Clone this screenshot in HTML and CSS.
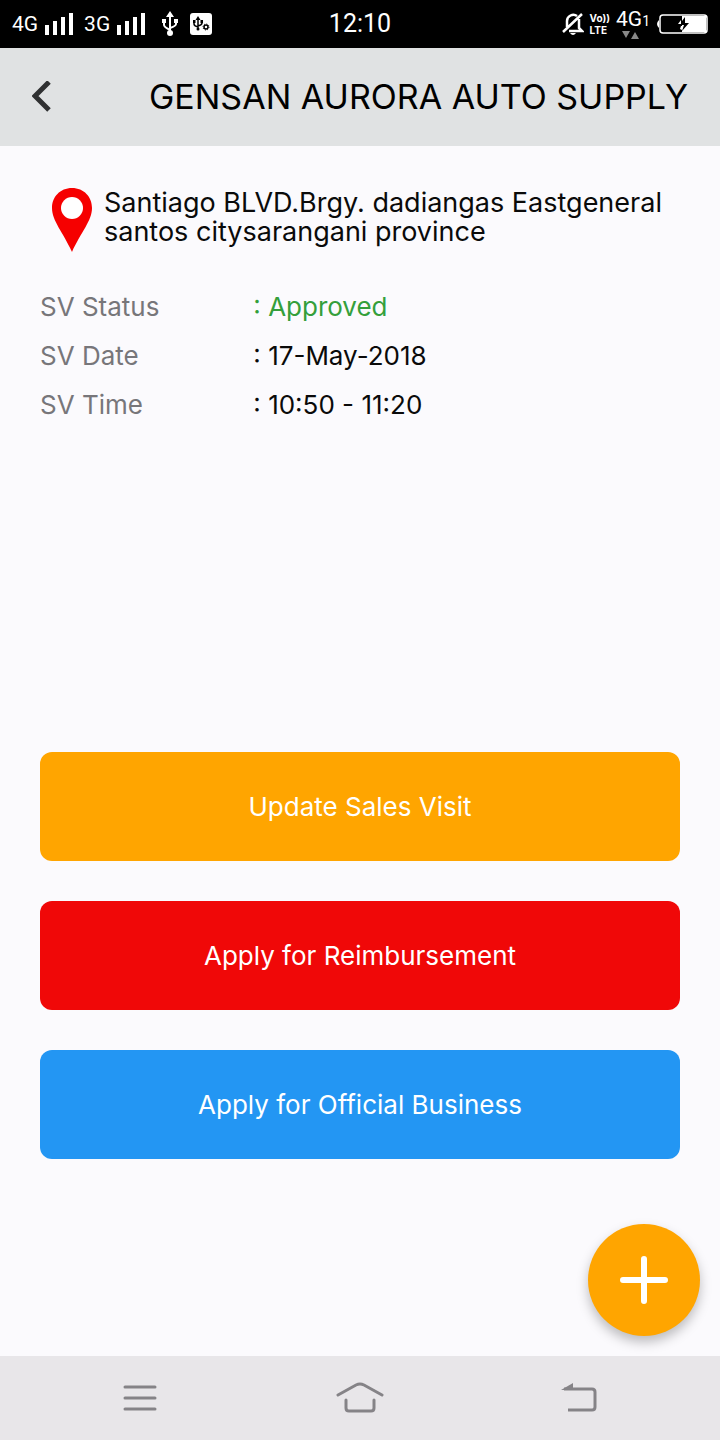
FILE: index.html
```
<!DOCTYPE html>
<html lang="en">
<head>
    <meta charset="UTF-8">
    <meta name="viewport" content="width=device-width, initial-scale=1.0">
    <title>Sales Visit</title>
    <link rel="stylesheet" href="styles.css">
</head>
<body>
    <div class="status-bar">
        <div class="status-left">
            <span>4G</span>
            <svg class="signal" width="30" height="24" viewBox="0 0 30 24" fill="#fff">
                <path d="M1 13h4v10H1zM9 9h4v14H9zM17 5h4v18h-4zM25 1h4v22h-4z"/>
            </svg>
            <span>3G</span>
            <svg class="signal" width="30" height="24" viewBox="0 0 30 24" fill="#fff">
                <path d="M1 13h4v10H1zM9 9h4v14H9zM17 5h4v18h-4zM25 1h4v22h-4z"/>
            </svg>
            <svg class="usb" width="16" height="26" viewBox="0 0 16 26" fill="none" stroke="#fff" stroke-width="2">
                <path d="M8 4v17M2 11v3q0 2 6 5M14 10v3q0 2-6 4"/>
                <path d="M8 0l4 6H4zM0 8h4v4H0zM12 8h4v4h-4z" fill="#fff" stroke="none"/>
                <circle cx="8" cy="22" r="3" fill="#fff" stroke="none"/>
            </svg>
            <svg width="22" height="22" viewBox="0 0 22 22" fill="none" stroke="#000">
                <rect width="22" height="22" rx="3" fill="#fff" stroke="none"/>
                <path d="M8 5v11M4 9v2q0 2 4 3M12 8v2q0 2-4 3" stroke-width="1.5"/>
                <path d="M8 3l2.500 4h-5zM3 7h2.500v3H3zM10.500 7H13v3h-2.500z" fill="#000" stroke="none"/>
                <circle cx="8" cy="16" r="1.500" fill="#000" stroke="none"/>
                <circle cx="16" cy="14" r="2" stroke-width="1.500"/>
                <circle cx="16" cy="14" r="3" stroke-dasharray="1 1.360"/>
            </svg>
        </div>
        <div class="clock">12:10</div>
        <div class="status-right">
            <svg width="22" height="24" viewBox="0 0 22 24" fill="none" stroke="#fff" stroke-width="2.500">
                <path d="M15 4C11 1 5 4 5 9v6M17 7v9l3 3H7M1 20L20 2"/>
                <path d="M8 21h6q-3 4-6 0z" fill="#fff" stroke="none"/>
            </svg>
            <div class="volte"><span>Vo))</span><span>LTE</span></div>
            <div class="network">
                <div>4G<small>1</small></div>
                <svg width="18" height="8" viewBox="0 0 18 8" fill="#888">
                    <path d="M0 0h8L4 7zM9 8h8l-4-7z"/>
                </svg>
            </div>
            <svg width="52" height="22" viewBox="0 0 52 22" fill="none">
                <path d="M3 7q-4 4 0 8z" fill="#fff"/>
                <rect x="4" y="2" width="47" height="18" rx="3" stroke="#fff" stroke-width="1.500"/>
                <path d="M26 3h24v16H26z" fill="#fff"/>
                <path d="M29 4l-6 8h5l-2 6 7-8h-4z" fill="#000"/>
                <path d="M25 7v4h-3zM26 13v4l-2-1 1-3z" fill="#fff"/>
            </svg>
        </div>
    </div>

    <header class="top-bar">
        <button class="back-button" aria-label="Back">
            <svg width="20" height="32" viewBox="0 0 20 32" fill="none" stroke="#303132" stroke-width="5">
                <path d="M17 1L3 15l14 14"/>
            </svg>
        </button>
        <h1 class="title">GENSAN AURORA AUTO SUPPLY</h1>
    </header>

    <main class="main-area">
        <div class="address">
            <svg width="40" height="64" viewBox="0 0 40 64">
                <path d="M20 0C8 0 0 9 0 20c0 13 11 24 20 44 9-20 20-31 20-44C40 9 32 0 20 0z" fill="#f60000"/>
                <circle cx="20" cy="20" r="11" fill="#fff"/>
            </svg>
            <div>Santiago BLVD.Brgy. dadiangas Eastgeneral santos citysarangani province</div>
        </div>

        <dl class="details">
            <dt>SV Status</dt>
            <dd class="approved">: Approved</dd>
            <dt>SV Date</dt>
            <dd>: 17-May-2018</dd>
            <dt>SV Time</dt>
            <dd>: 10:50 - 11:20</dd>
        </dl>

        <div class="button-container">
            <button class="button update-button">Update Sales Visit</button>
            <button class="button reimbursement-button">Apply for Reimbursement</button>
            <button class="button business-button">Apply for Official Business</button>
        </div>

        <button class="add-button" aria-label="Add">
            <svg width="48" height="48" viewBox="0 0 48 48" stroke="#fff" stroke-width="6" stroke-linecap="round">
                <path d="M24 3v42M3 24h42"/>
            </svg>
        </button>
    </main>

    <nav class="nav-bar">
        <button class="nav-button" aria-label="Menu">
            <svg width="48" height="32" viewBox="0 0 48 32" fill="none" stroke="#858387" stroke-width="3" stroke-linecap="round">
                <path d="M9 5h30M9 16h30M9 27h30"/>
            </svg>
        </button>
        <button class="nav-button" aria-label="Home">
            <svg width="48" height="32" viewBox="0 0 48 32" fill="none" stroke="#858387" stroke-width="3" stroke-linecap="round">
                <path d="M2 13L20 3q4-2 8 0l18 10M10 18v8q0 3 3 3h22q3 0 3-3v-8"/>
            </svg>
        </button>
        <button class="nav-button" aria-label="Back">
            <svg width="48" height="32" viewBox="0 0 48 32" fill="none" stroke="#858387" stroke-width="3">
                <path d="M8 7h28q3 0 3 3v15q0 3-3 3H12"/>
                <path d="M5 8l12-7v7z" fill="#858387" stroke="none"/>
            </svg>
        </button>
    </nav>
</body>
</html>
```
FILE: styles.css
```
* {
    box-sizing: border-box;
}
body {
    font-family: Inter, "Liberation Sans", sans-serif;
    font-size: 26px;
    line-height: 29px;
    margin: 0;
    min-height: 100vh;
    display: flex;
    flex-direction: column;
    background-color: #fbfafd;
    color: #0a0a0a;
}
button {
    font: inherit;
    border: none;
    padding: 0;
    cursor: pointer;
}
svg {
    display: block;
    flex: none;
}

/* Phone status bar */
.status-bar {
    display: grid;
    grid-template-columns: 1fr auto 1fr;
    align-items: center;
    height: 48px;
    padding: 0 12px;
    background-color: #000;
    color: #fff;
    font-family: Roboto, sans-serif;
    font-size: 21px;
    line-height: 24px;
}
.status-left,
.status-right {
    display: flex;
    align-items: center;
}
.status-left {
    gap: 6px;
}
.signal {
    margin-right: 4px;
}
.usb {
    margin: 0 6px;
}
.clock {
    font-size: 25px;
}
.status-right {
    justify-content: flex-end;
    gap: 6px;
}
.volte {
    display: flex;
    flex-direction: column;
    font-family: Inter, sans-serif;
    font-size: 10px;
    font-weight: bold;
    line-height: 12px;
}
.network {
    line-height: 20px;
}
.network small {
    font-size: 14px;
}
.network svg {
    margin-left: 6px;
}

/* Header */
.top-bar {
    display: flex;
    align-items: center;
    justify-content: space-between;
    height: 98px;
    padding: 0 32px;
    background-color: #e0e2e3;
}
.back-button {
    background: none;
}
.title {
    margin: 0;
    font-size: 34px;
    line-height: 40px;
    font-weight: normal;
    color: #000;
}

/* Visit details */
.main-area {
    flex: 1;
    display: flex;
    flex-direction: column;
    position: relative;
    padding: 42px 40px 197px;
}
.address {
    display: flex;
    gap: 12px;
    padding-left: 12px;
    margin-right: -20px;
    font-size: 27px;
}
.details {
    display: grid;
    grid-template-columns: 1fr 2fr;
    row-gap: 20px;
    margin: 40px 0;
}
.details dt {
    color: #77767a;
}
.details dd {
    margin: 0;
}
.details .approved {
    color: #349f3b;
}
.button-container {
    display: flex;
    flex-direction: column;
    gap: 40px;
    margin-top: auto;
}
.button {
    height: 109px;
    border-radius: 12px;
    color: white;
}
.update-button {
    background-color: #ffa500;
}
.reimbursement-button {
    background-color: #f00808;
}
.business-button {
    background-color: #2396f3;
}
.add-button {
    position: absolute; /* Floats over the page */
    right: 20px;
    bottom: 20px;
    display: flex;
    align-items: center;
    justify-content: center;
    width: 112px;
    height: 112px;
    border-radius: 50%;
    background-color: #ffa500;
    box-shadow: 0 6px 12px rgba(0, 0, 0, 0.25);
}

/* Phone navigation */
.nav-bar {
    display: flex;
    justify-content: space-between;
    align-items: center;
    height: 84px;
    padding: 0 116px;
    background-color: #e8e6e9;
}
.nav-button {
    background: none;
}
```
